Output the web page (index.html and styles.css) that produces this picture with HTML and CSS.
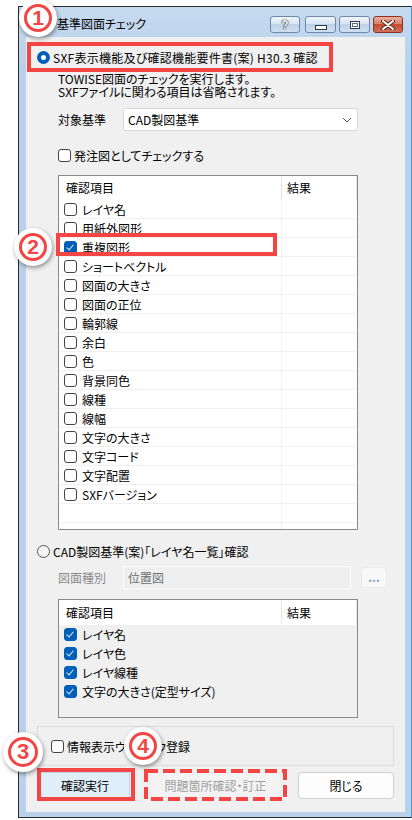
FILE: index.html
```html
<!DOCTYPE html>
<html lang="ja">
<head>
<meta charset="UTF-8">
<meta name="viewport" content="width=device-width, initial-scale=1.0">
<title>基準図面チェック</title>
<link rel="stylesheet" href="styles.css">
</head>
<body>
<div class="screen">
    <div class="window">
        <div class="titlebar">
            <span class="title">基準図面チェック</span>
            <div class="caption">
                <span class="cap help">?</span>
                <span class="cap min"><i></i></span>
                <span class="cap max"><i></i></span>
                <span class="cap close">
                    <svg width="14" height="10" viewBox="0 0 14 10">
                        <path d="M2 1 L12 9 M12 1 L2 9" stroke="#5a2418" stroke-width="4" stroke-linecap="round"/>
                        <path d="M2 1 L12 9 M12 1 L2 9" stroke="#fff" stroke-width="2" stroke-linecap="round"/>
                    </svg>
                </span>
            </div>
        </div>
        <div class="client">
            <div class="opt opt1"><span class="radio on"></span>SXF表示機能及び確認機能要件書(案) H30.3 確認</div>
            <p class="desc">TOWISE図面のチェックを実行します。<br>SXFファイルに関わる項目は省略されます。</p>
            <div class="field">
                <span class="field-label">対象基準</span>
                <div class="select">CAD製図基準
                    <svg class="chev" width="10" height="6" viewBox="0 0 10 6"><path d="M1 1 L5 5 L9 1" fill="none" stroke="#555" stroke-width="1"/></svg>
                </div>
            </div>
            <div class="check"><span class="cb"></span>発注図としてチェックする</div>

            <div class="list main-list">
                <div class="list-head"><span class="c1">確認項目</span><span class="c2">結果</span></div>
                <div class="row"><span class="c1"><span class="cb"></span>レイヤ名</span><span class="c2"></span></div>
                <div class="row"><span class="c1"><span class="cb"></span>用紙外図形</span><span class="c2"></span></div>
                <div class="row"><span class="c1"><span class="cb on"></span>重複図形</span><span class="c2"></span></div>
                <div class="row"><span class="c1"><span class="cb"></span>ショートベクトル</span><span class="c2"></span></div>
                <div class="row"><span class="c1"><span class="cb"></span>図面の大きさ</span><span class="c2"></span></div>
                <div class="row"><span class="c1"><span class="cb"></span>図面の正位</span><span class="c2"></span></div>
                <div class="row"><span class="c1"><span class="cb"></span>輪郭線</span><span class="c2"></span></div>
                <div class="row"><span class="c1"><span class="cb"></span>余白</span><span class="c2"></span></div>
                <div class="row"><span class="c1"><span class="cb"></span>色</span><span class="c2"></span></div>
                <div class="row"><span class="c1"><span class="cb"></span>背景同色</span><span class="c2"></span></div>
                <div class="row"><span class="c1"><span class="cb"></span>線種</span><span class="c2"></span></div>
                <div class="row"><span class="c1"><span class="cb"></span>線幅</span><span class="c2"></span></div>
                <div class="row"><span class="c1"><span class="cb"></span>文字の大きさ</span><span class="c2"></span></div>
                <div class="row"><span class="c1"><span class="cb"></span>文字コード</span><span class="c2"></span></div>
                <div class="row"><span class="c1"><span class="cb"></span>文字配置</span><span class="c2"></span></div>
                <div class="row"><span class="c1"><span class="cb"></span>SXFバージョン</span><span class="c2"></span></div>
                <div class="row"><span class="c1"></span><span class="c2"></span></div>
                <div class="row"><span class="c1"></span><span class="c2"></span></div>
            </div>

            <div class="opt opt2"><span class="radio"></span>CAD製図基準(案)「レイヤ名一覧」確認</div>
            <div class="field field2 off">
                <span class="field-label">図面種別</span>
                <div class="input">位置図</div>
                <span class="more">...</span>
            </div>

            <div class="list sub-list">
                <div class="list-head"><span class="c1">確認項目</span><span class="c2">結果</span></div>
                <div class="row plain"><span class="c1"><span class="cb on"></span>レイヤ名</span></div>
                <div class="row plain"><span class="c1"><span class="cb on"></span>レイヤ色</span></div>
                <div class="row plain"><span class="c1"><span class="cb on"></span>レイヤ線種</span></div>
                <div class="row plain"><span class="c1"><span class="cb on"></span>文字の大きさ(定型サイズ)</span></div>
            </div>

            <div class="group">
                <div class="check"><span class="cb"></span>情報表示ウィンドウ登録</div>
            </div>

            <div class="btns">
                <span class="btn default">確認実行</span>
                <span class="btn disabled">問題箇所確認・訂正</span>
                <span class="btn close-btn">閉じる</span>
            </div>
        </div>
    </div>

    <!-- annotations over the dialog -->
    <div class="hl hl1"></div>
    <div class="hl hl2"></div>
    <div class="hl hl3"></div>
    <svg class="hl4" width="143" height="32" viewBox="0 0 143 32">
        <rect x="2" y="2" width="139" height="28" fill="none" stroke="#f44545" stroke-width="4" stroke-dasharray="12 5"/>
    </svg>
    <div class="mark m1"><span>1</span></div>
    <div class="mark m2"><span>2</span></div>
    <div class="mark m3"><span>3</span></div>
    <div class="mark m4"><span>4</span></div>
</div>
</body>
</html>
```

FILE: styles.css
```css
body {
    margin: 0;
    background: #fff;
    font-family: "Noto Sans CJK JP", "Noto Sans", sans-serif;
    font-size: 12px;
    color: #000;
    font-feature-settings: "palt";
}

.screen {
    position: relative;
    width: 412px;
    height: 820px;
    overflow: hidden;
}

.window {
    box-sizing: border-box;
    width: 394px;
    height: 812px;
    margin: 6px 0 0 18px;
    border: 1px solid #2b2b2b;
    border-right-color: #3b9fdc;
    background: linear-gradient(#c6daef, #b9d1ea 60px);
    padding: 0 5px 5px 7px;
    display: flex;
    flex-direction: column;
}

/* title bar */
.titlebar {
    height: 30px;
    box-sizing: border-box;
    padding-top: 9px;
    display: flex;
    align-items: flex-start;
}

.title {
    margin-left: 31px;
    line-height: 16px;
}

.caption {
    margin-left: auto;
    margin-right: 3px;
    display: flex;
}

.cap {
    box-sizing: border-box;
    height: 17px;
    width: 31px;
    margin-left: 3px;
    border: 1px solid #7088a8;
    border-radius: 3px;
    background: linear-gradient(#f0f5fb, #d7e4f2 45%, #bed1e7 50%, #cfdff0);
    display: flex;
    align-items: center;
    justify-content: center;
}

.help {
    width: 30px;
    margin-left: 0;
    margin-right: 2px;
    font-family: "Liberation Sans", sans-serif;
    font-weight: bold;
    font-size: 12px;
    color: #fff;
    text-shadow: 0 0 1px #223, 0 0 1px #223, 0 0 1px #223;
}

.min i {
    display: block;
    width: 10px;
    height: 3px;
    margin-top: 5px;
    background: #fff;
    border: 1px solid #2e3a4a;
}

.max i {
    display: block;
    width: 8px;
    height: 6px;
    background: #fff;
    border: 1px solid #2e3a4a;
    box-shadow: inset 0 0 0 1px #fff, inset 0 0 0 2px #5a6a80;
}

.close {
    width: 30px;
    border-color: #8c3224;
    background: linear-gradient(#eab0a2, #d9806a 45%, #c44b32 50%, #d0705a);
}

/* dialog body */
.client {
    flex: 1;
    background: #f0f0f0;
    padding-top: 12px;
    margin-right: 1px;
}

.opt {
    display: flex;
    align-items: center;
    height: 16px;
    margin-left: 11px;
}

.opt1 {
    letter-spacing: 0.25px;
}

.opt2 {
    margin-top: 13px;
}

.radio {
    box-sizing: border-box;
    width: 13px;
    height: 13px;
    margin-right: 3px;
    border: 1px solid #555;
    border-radius: 50%;
    background: #f4f4f4;
}

.radio.on {
    border: 4px solid #005fb8;
    background: #fff;
}

.desc {
    margin: 7px 0 0 32px;
    line-height: 13px;
}

.field {
    display: flex;
    align-items: center;
    height: 23px;
    margin: 10px 0 0 32px;
}

.field2 {
    margin-top: 7px;
}

.field-label {
    width: 65px;
}

.select {
    box-sizing: border-box;
    width: 235px;
    height: 23px;
    padding-left: 4px;
    border: 1px solid #d6d6d6;
    border-radius: 3px;
    background: #fff;
    display: flex;
    align-items: center;
}

.chev {
    margin-left: auto;
    margin-right: 5px;
}

.off .field-label {
    color: #8a8a8a;
}

.input {
    box-sizing: border-box;
    width: 228px;
    height: 23px;
    padding: 2px 0 0 4px;
    border: 1px solid #fafafa;
    background: #efefef;
    color: #6d6d6d;
}

.more {
    box-sizing: border-box;
    width: 26px;
    height: 21px;
    margin-left: 10px;
    border: 1px solid #ebebeb;
    border-radius: 4px;
    background: #f8f8f8;
    color: #7a9ab8;
    text-align: center;
    line-height: 17px;
    font-weight: bold;
}

.check {
    display: flex;
    align-items: center;
    height: 16px;
    margin: 16px 0 0 32px;
}

.cb {
    box-sizing: border-box;
    position: relative;
    flex: none;
    width: 13px;
    height: 13px;
    margin-right: 3px;
    border: 1px solid #444;
    border-radius: 3px;
    background: #fff;
}

.cb.on {
    border-color: #005fb8;
    background: #005fb8;
}

.cb.on::after {
    content: "";
    position: absolute;
    left: 3px;
    top: 1px;
    width: 3px;
    height: 6px;
    border-right: 1px solid #dfe9f5;
    border-bottom: 1px solid #dfe9f5;
    transform: rotate(40deg);
}

/* list views */
.list {
    box-sizing: border-box;
    width: 300px;
    margin: 12px 0 0 32px;
    border: 1px solid #888;
    background: #fff;
    overflow: hidden;
}

.main-list {
    height: 355px;
}

.sub-list {
    height: 119px;
    margin-top: 10px;
    background: #f0f0f0;
}

.list-head {
    display: flex;
    height: 24px;
    align-items: center;
    background: #fff;
}

.sub-list .list-head {
    height: 25px;
}

.list-head .c1 {
    box-sizing: border-box;
    width: 223px;
    height: 24px;
    line-height: 24px;
    padding-left: 7px;
    border-right: 1px solid #e5e5e5;
}

.list-head .c2 {
    flex: 1;
    height: 24px;
    line-height: 24px;
    padding-left: 5px;
    border-right: 1px solid #e5e5e5;
}

.row {
    display: flex;
    height: 19px;
}

.row .c1 {
    box-sizing: border-box;
    width: 223px;
    padding-left: 5px;
    display: flex;
    align-items: center;
    border-bottom: 1px solid #f0f0f0;
    border-right: 1px solid #f0f0f0;
}

.row .c2 {
    flex: 1;
    border-bottom: 1px solid #f0f0f0;
}

.row .cb {
    margin-right: 5px;
}

.row.plain .c1 {
    border: 0;
}

/* bottom area */
.group {
    box-sizing: border-box;
    width: 357px;
    height: 40px;
    margin: 8px 0 0 11px;
    padding-left: 13px;
    border: 1px solid #dcdcdc;
    display: flex;
    align-items: center;
}

.group .check {
    margin: 0;
}

.btns {
    display: flex;
    margin: 6px 0 0 14px;
}

.btn {
    box-sizing: border-box;
    height: 26px;
    border: 1px solid #d0d0d0;
    border-radius: 4px;
    background: #fdfdfd;
    display: flex;
    align-items: center;
    justify-content: center;
}

.default {
    width: 90px;
    border-color: #b8d4ee;
    border-radius: 0;
    background: #e0eef9;
}

.disabled {
    width: 131px;
    margin-left: 20px;
    border-color: #ececec;
    background: #f3f3f3;
    color: #a0a0a0;
}

.close-btn {
    width: 96px;
    height: 27px;
    margin-left: 17px;
}

/* red annotations */
.hl {
    position: absolute;
    box-sizing: border-box;
    border: 4px solid #f44545;
}

.hl1 {
    left: 27px;
    top: 42px;
    width: 306px;
    height: 30px;
}

.hl2 {
    left: 56px;
    top: 233px;
    width: 221px;
    height: 23px;
}

.hl3 {
    left: 37px;
    top: 768px;
    width: 98px;
    height: 33px;
}

.hl4 {
    position: absolute;
    left: 144px;
    top: 769px;
}

.mark {
    position: absolute;
    width: 38px;
    height: 38px;
    border-radius: 50%;
    background: #fff;
    box-shadow: 1px 2px 4px rgba(0, 0, 0, 0.4);
    display: flex;
    align-items: center;
    justify-content: center;
}

.mark span {
    box-sizing: border-box;
    width: 28px;
    height: 28px;
    border: 3px solid #f44545;
    border-radius: 50%;
    color: #f44545;
    font-family: "Liberation Sans", sans-serif;
    font-weight: bold;
    font-size: 21px;
    line-height: 22px;
    text-align: center;
}

.m1 {
    left: 19px;
    top: -1px;
}

.m2 {
    left: 14px;
    top: 228px;
}

.m3 {
    left: 3px;
    top: 732px;
    width: 40px;
    height: 40px;
}

.m3 span {
    width: 30px;
    height: 30px;
    line-height: 24px;
    font-size: 22px;
}

.m4 {
    left: 124px;
    top: 727px;
}
```
